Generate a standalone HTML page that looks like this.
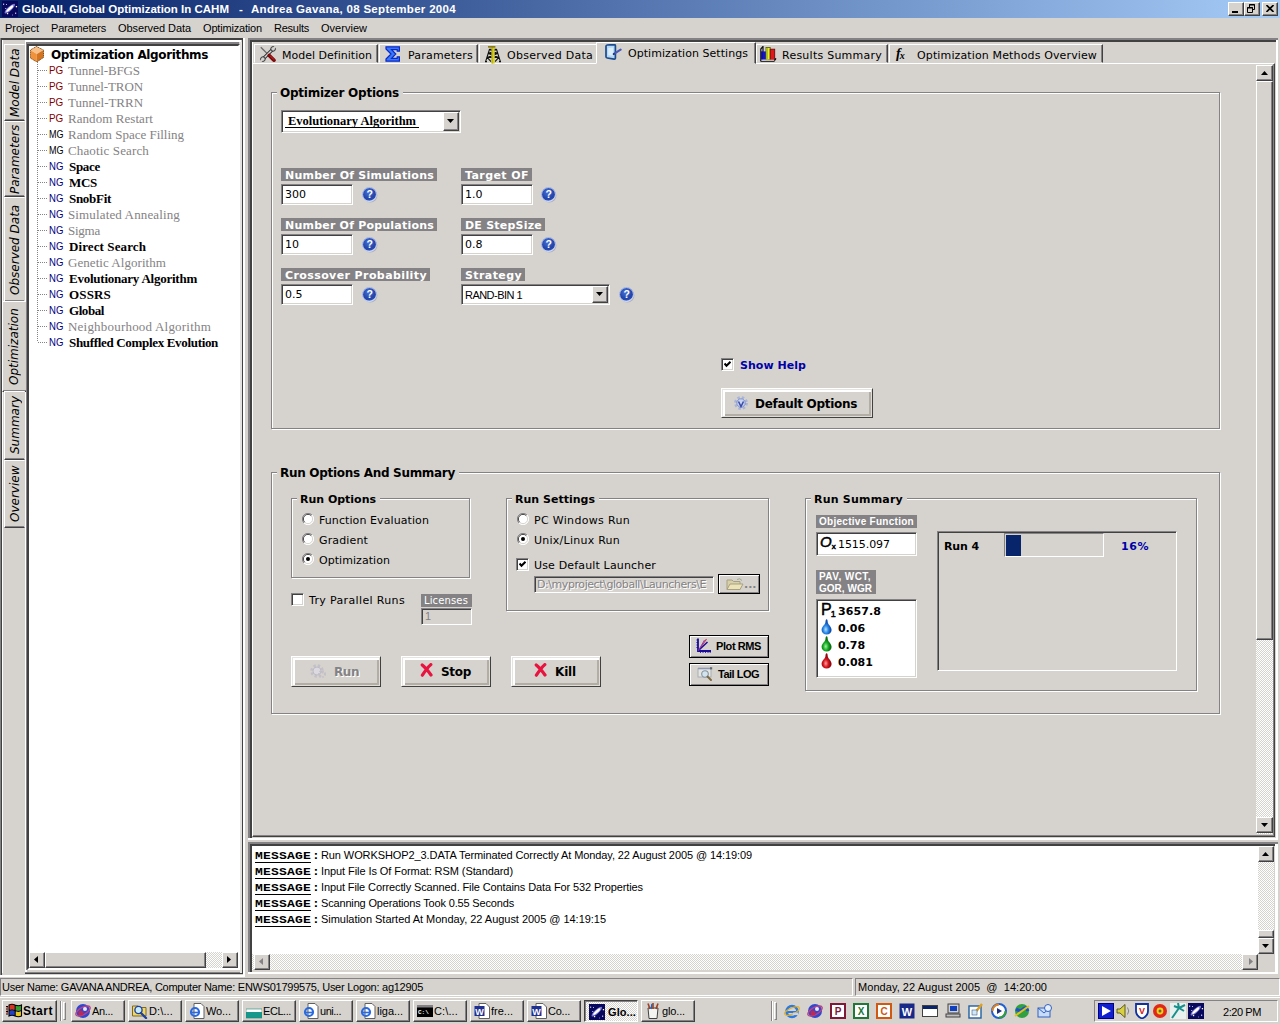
<!DOCTYPE html>
<html lang="en"><head><meta charset="utf-8"><title>GlobAll, Global Optimization In CAHM</title>
<style>
html,body{margin:0;padding:0;background:#d6d3ce}
#r{position:relative;width:1280px;height:1024px;overflow:hidden;background:#d6d3ce;color:#000;font:11px "Liberation Sans",sans-serif}
#r div,#r span,#r svg{position:absolute;box-sizing:border-box;white-space:nowrap;margin:0;padding:0}
.t{font-family:"Liberation Sans",sans-serif;font-size:11px}
.tb{font-family:"Liberation Sans",sans-serif;font-size:11px;font-weight:bold}
.v{font-family:"DejaVu Sans","Liberation Sans",sans-serif;font-size:11px}
.vb{font-family:"DejaVu Sans","Liberation Sans",sans-serif;font-size:11px;font-weight:bold}
.vg{font-family:"DejaVu Sans","Liberation Sans",sans-serif;font-size:12px;font-weight:bold}
.vi{font-family:"DejaVu Sans","Liberation Sans",sans-serif;font-size:12px;font-style:italic;writing-mode:vertical-rl;transform:rotate(180deg)}
.s{font-family:"Liberation Serif",serif;font-size:13px;color:#848284}
.sb{font-family:"Liberation Serif",serif;font-size:13px;font-weight:bold}
.m{font-family:"Liberation Mono",monospace;font-size:13px;font-weight:bold;transform:scaleY(.87);transform-origin:0 55%}
.btn{background:#d6d3ce;border:1px solid;border-color:#fff #424142 #424142 #fff;box-shadow:inset -1px -1px 0 #848284,inset 1px 1px 0 #d6d3ce}
.sbtn{background:#d6d3ce;border:1px solid;border-color:#d6d3ce #424142 #424142 #d6d3ce;box-shadow:inset -1px -1px 0 #848284,inset 1px 1px 0 #fff}
.gbtn{background:#d6d3ce;border:1px solid;border-color:#fff #424142 #424142 #fff;box-shadow:inset 1px 1px 0 #e6e4e0,inset -1px -1px 0 #e0ddd7,inset 3px 3px 0 #fff,inset -3px -3px 0 #b2aea6}
.bbtn{background:#d6d3ce;border:1px solid #000;box-shadow:inset 1px 1px 0 #fff,inset -1px -1px 0 #848284}
.sunk{border:1px solid;border-color:#848284 #fff #fff #848284;box-shadow:inset 1px 1px 0 #424142,inset -1px -1px 0 #d6d3ce}
.sunk2{border:1px solid;border-color:#848284 #fff #fff #848284;box-shadow:inset 1px 1px 0 #424142,inset 2px 2px 0 #424142,inset -1px -1px 0 #d6d3ce}
.sunk1{border:1px solid;border-color:#848284 #fff #fff #848284}
.grp{border:1px solid #848284;box-shadow:1px 1px 0 #fff,inset 1px 1px 0 #fff}
.lab{background:#848284;color:#fff}
.hatch{background:conic-gradient(#fff 25%,#d6d3ce 0 50%,#fff 0 75%,#d6d3ce 0) 0 0/2px 2px}
.w{background:#fff}
.g{background:#d6d3ce}
</style></head>
<body><div id="r">
<div style="left:0px;top:0px;width:1280px;height:18px;background:linear-gradient(90deg,#08246b 0%,#08246b 2%,#a5cbf7 100%)"></div>
<svg style="left:2px;top:1px" width="16" height="16" viewBox="0 0 16 16"><rect width="16" height="16" fill="#08085c"/><ellipse cx="7.8" cy="7.6" rx="6.8" ry="2.1" fill="#7a78d0" transform="rotate(-42 7.8 7.6)"/><ellipse cx="7.8" cy="7.6" rx="4.6" ry="1.3" fill="#fff" transform="rotate(-42 7.8 7.6)"/><rect x="1" y="2.6" width="1.2" height="1.2" fill="#dcd8ff"/><rect x="4" y="3" width="1" height="1" fill="#b8b0f0"/><rect x="13.8" y="5" width="1.3" height="1.3" fill="#fff"/><rect x="3.2" y="7" width="1" height="1" fill="#c8c0ff"/><rect x="5" y="12" width="1.2" height="1.2" fill="#fff"/><rect x="13" y="11.6" width="1.2" height="1.2" fill="#e0dcff"/><rect x="10" y="13.5" width="1" height="1" fill="#8078c8"/></svg>
<span class="tb" style="left:22px;top:1px;line-height:16px;height:16px;letter-spacing:0.000px;color:#fff;font-size:11.5px">GlobAll, Global Optimization In CAHM</span>
<span class="tb" style="left:239px;top:1px;line-height:16px;height:16px;color:#fff;font-size:11.5px">-</span>
<span class="tb" style="left:251px;top:1px;line-height:16px;height:16px;letter-spacing:0.313px;color:#fff;font-size:11.5px">Andrea Gavana, 08 September 2004</span>
<div class="btn" style="left:1228px;top:2px;width:16px;height:14px;"></div>
<div class="btn" style="left:1244px;top:2px;width:16px;height:14px;"></div>
<div class="btn" style="left:1262px;top:2px;width:16px;height:14px;"></div>
<svg style="left:1232px;top:11px" width="6" height="2" viewBox="0 0 6 2"><rect width="6" height="2" fill="#000"/></svg>
<svg style="left:1247px;top:4px" width="9" height="9" viewBox="0 0 9 9"><path d="M2.5 3 V0.5 H7.5 V5.5 H6 M2 1 H8 M0.5 3.5 H5.5 V8.5 H0.5 Z M0 4 H6" stroke="#000" fill="none" stroke-width="1"/></svg>
<svg style="left:1266px;top:5px" width="8" height="7" viewBox="0 0 8 7"><path d="M0.5 0 L7.5 7 M7.5 0 L0.5 7" stroke="#000" stroke-width="1.6"/></svg>
<span class="t" style="left:5px;top:19px;line-height:19px;height:19px;letter-spacing:-0.036px;">Project</span>
<span class="t" style="left:51px;top:19px;line-height:19px;height:19px;letter-spacing:-0.186px;">Parameters</span>
<span class="t" style="left:118px;top:19px;line-height:19px;height:19px;letter-spacing:-0.076px;">Observed Data</span>
<span class="t" style="left:203px;top:19px;line-height:19px;height:19px;letter-spacing:-0.178px;">Optimization</span>
<span class="t" style="left:274px;top:19px;line-height:19px;height:19px;letter-spacing:-0.241px;">Results</span>
<span class="t" style="left:321px;top:19px;line-height:19px;height:19px;letter-spacing:0.020px;">Overview</span>
<div style="left:0px;top:38px;width:1px;height:938px;background:#848284"></div>
<div style="left:1px;top:38px;width:1px;height:937px;background:#424142"></div>
<div style="left:1px;top:38px;width:242px;height:2px;background:#424142"></div>
<div style="left:242px;top:38px;width:1px;height:936px;background:#424142"></div>
<div style="left:243px;top:38px;width:2px;height:939px;background:#fff"></div>
<div style="left:0px;top:975px;width:245px;height:2px;background:#fff"></div>
<div style="left:2px;top:40px;width:1px;height:933px;background:#fff"></div>
<div style="left:25px;top:40px;width:2px;height:933px;background:#fff"></div>
<div style="left:25px;top:40px;width:216px;height:2px;background:#fff"></div>
<div style="left:25px;top:972px;width:217px;height:1px;background:#848284"></div>
<div style="left:25px;top:973px;width:217px;height:1px;background:#424142"></div>
<div style="left:240px;top:42px;width:2px;height:931px;background:#e4e2de"></div>
<div style="left:4px;top:44px;width:21px;height:77px;background:#d6d3ce;border:1px solid;border-color:#fff transparent #424142 #fff;box-shadow:inset 0 -1px 0 #848284"></div>
<div style="left:4px;top:121px;width:21px;height:76px;background:#d6d3ce;border:1px solid;border-color:#fff transparent #424142 #fff;box-shadow:inset 0 -1px 0 #848284"></div>
<div style="left:4px;top:197px;width:21px;height:105px;background:#d6d3ce;border:1px solid;border-color:#fff transparent #424142 #fff;box-shadow:inset 0 -1px 0 #848284"></div>
<div style="left:2px;top:301px;width:25px;height:91px;background:#d6d3ce;border:1px solid;border-color:#fff transparent #424142 #fff;box-shadow:inset 0 -1px 0 #848284"></div>
<div style="left:4px;top:391px;width:21px;height:69px;background:#d6d3ce;border:1px solid;border-color:#fff transparent #424142 #fff;box-shadow:inset 0 -1px 0 #848284"></div>
<div style="left:4px;top:460px;width:21px;height:68px;background:#d6d3ce;border:1px solid;border-color:#fff transparent #424142 #fff;box-shadow:inset 0 -1px 0 #848284"></div>
<span class="vi" style="left:7px;top:44px;height:77px;width:16px;line-height:16px;text-align:center">Model Data</span>
<span class="vi" style="left:7px;top:121px;height:76px;width:16px;line-height:16px;text-align:center">Parameters</span>
<span class="vi" style="left:7px;top:197px;height:105px;width:16px;line-height:16px;text-align:center">Observed Data</span>
<span class="vi" style="left:6px;top:302px;height:89px;width:16px;line-height:16px;text-align:center">Optimization</span>
<span class="vi" style="left:7px;top:391px;height:69px;width:16px;line-height:16px;text-align:center">Summary</span>
<span class="vi" style="left:7px;top:460px;height:68px;width:16px;line-height:16px;text-align:center">Overview</span>
<div style="left:27px;top:42px;width:212px;height:2px;background:#848284"></div>
<div style="left:26px;top:42px;width:1px;height:928px;background:#848284"></div>
<div class="w" style="left:27px;top:44px;width:213px;height:926px;border:2px solid;border-color:#424142 #fff #fff #424142"></div>
<svg style="left:30px;top:46px" width="14" height="16" viewBox="0 0 14 16"><polygon points="6.5,0.5 13.5,4 6.8,8 0.3,4" fill="#f8c088"/><polygon points="0.3,4 6.8,8 6.8,16 0.3,12" fill="#f0923c"/><polygon points="13.5,4 6.8,8 6.8,16 13.5,11.5" fill="#d47420"/><polygon points="6.5,0.5 13.5,4 13.5,11.5 6.8,16 0.3,12 0.3,4" fill="none" stroke="#70400c" stroke-width=".9" stroke-dasharray="1.2 .6"/></svg>
<span class="vg" style="left:51px;top:47px;line-height:16px;height:16px;letter-spacing:-0.363px;">Optimization Algorithms</span>
<div style="left:37px;top:62px;width:1px;height:280px;background:repeating-linear-gradient(180deg,#848284 0 1px,transparent 1px 2px)"></div>
<div style="left:38px;top:70px;width:10px;height:1px;background:repeating-linear-gradient(90deg,#848284 0 1px,transparent 1px 2px)"></div>
<span class="t" style="left:49px;top:62px;line-height:16px;height:16px;color:#800000;transform:scaleX(0.9);transform-origin:0 0">PG</span>
<span class="s" style="left:68px;top:63px;line-height:16px;height:16px;letter-spacing:-0.111px;">Tunnel-BFGS</span>
<div style="left:38px;top:86px;width:10px;height:1px;background:repeating-linear-gradient(90deg,#848284 0 1px,transparent 1px 2px)"></div>
<span class="t" style="left:49px;top:78px;line-height:16px;height:16px;color:#800000;transform:scaleX(0.9);transform-origin:0 0">PG</span>
<span class="s" style="left:68px;top:79px;line-height:16px;height:16px;letter-spacing:-0.099px;">Tunnel-TRON</span>
<div style="left:38px;top:102px;width:10px;height:1px;background:repeating-linear-gradient(90deg,#848284 0 1px,transparent 1px 2px)"></div>
<span class="t" style="left:49px;top:94px;line-height:16px;height:16px;color:#800000;transform:scaleX(0.9);transform-origin:0 0">PG</span>
<span class="s" style="left:68px;top:95px;line-height:16px;height:16px;letter-spacing:-0.034px;">Tunnel-TRRN</span>
<div style="left:38px;top:118px;width:10px;height:1px;background:repeating-linear-gradient(90deg,#848284 0 1px,transparent 1px 2px)"></div>
<span class="t" style="left:49px;top:110px;line-height:16px;height:16px;color:#800000;transform:scaleX(0.9);transform-origin:0 0">PG</span>
<span class="s" style="left:68px;top:111px;line-height:16px;height:16px;letter-spacing:0.061px;">Random Restart</span>
<div style="left:38px;top:134px;width:10px;height:1px;background:repeating-linear-gradient(90deg,#848284 0 1px,transparent 1px 2px)"></div>
<span class="t" style="left:49px;top:126px;line-height:16px;height:16px;color:#000;transform:scaleX(0.82);transform-origin:0 0">MG</span>
<span class="s" style="left:68px;top:127px;line-height:16px;height:16px;letter-spacing:-0.014px;">Random Space Filling</span>
<div style="left:38px;top:150px;width:10px;height:1px;background:repeating-linear-gradient(90deg,#848284 0 1px,transparent 1px 2px)"></div>
<span class="t" style="left:49px;top:142px;line-height:16px;height:16px;color:#000;transform:scaleX(0.82);transform-origin:0 0">MG</span>
<span class="s" style="left:68px;top:143px;line-height:16px;height:16px;letter-spacing:0.138px;">Chaotic Search</span>
<div style="left:38px;top:166px;width:10px;height:1px;background:repeating-linear-gradient(90deg,#848284 0 1px,transparent 1px 2px)"></div>
<span class="t" style="left:49px;top:158px;line-height:16px;height:16px;color:#000080;transform:scaleX(0.87);transform-origin:0 0">NG</span>
<span class="sb" style="left:69px;top:159px;line-height:16px;height:16px;letter-spacing:-0.300px;">Space</span>
<div style="left:38px;top:182px;width:10px;height:1px;background:repeating-linear-gradient(90deg,#848284 0 1px,transparent 1px 2px)"></div>
<span class="t" style="left:49px;top:174px;line-height:16px;height:16px;color:#000080;transform:scaleX(0.87);transform-origin:0 0">NG</span>
<span class="sb" style="left:69px;top:175px;line-height:16px;height:16px;letter-spacing:-0.297px;">MCS</span>
<div style="left:38px;top:198px;width:10px;height:1px;background:repeating-linear-gradient(90deg,#848284 0 1px,transparent 1px 2px)"></div>
<span class="t" style="left:49px;top:190px;line-height:16px;height:16px;color:#000080;transform:scaleX(0.87);transform-origin:0 0">NG</span>
<span class="sb" style="left:69px;top:191px;line-height:16px;height:16px;letter-spacing:-0.297px;">SnobFit</span>
<div style="left:38px;top:214px;width:10px;height:1px;background:repeating-linear-gradient(90deg,#848284 0 1px,transparent 1px 2px)"></div>
<span class="t" style="left:49px;top:206px;line-height:16px;height:16px;color:#000080;transform:scaleX(0.87);transform-origin:0 0">NG</span>
<span class="s" style="left:68px;top:207px;line-height:16px;height:16px;letter-spacing:0.137px;">Simulated Annealing</span>
<div style="left:38px;top:230px;width:10px;height:1px;background:repeating-linear-gradient(90deg,#848284 0 1px,transparent 1px 2px)"></div>
<span class="t" style="left:49px;top:222px;line-height:16px;height:16px;color:#000080;transform:scaleX(0.87);transform-origin:0 0">NG</span>
<span class="s" style="left:68px;top:223px;line-height:16px;height:16px;letter-spacing:-0.247px;">Sigma</span>
<div style="left:38px;top:246px;width:10px;height:1px;background:repeating-linear-gradient(90deg,#848284 0 1px,transparent 1px 2px)"></div>
<span class="t" style="left:49px;top:238px;line-height:16px;height:16px;color:#000080;transform:scaleX(0.87);transform-origin:0 0">NG</span>
<span class="sb" style="left:69px;top:239px;line-height:16px;height:16px;letter-spacing:0.100px;">Direct Search</span>
<div style="left:38px;top:262px;width:10px;height:1px;background:repeating-linear-gradient(90deg,#848284 0 1px,transparent 1px 2px)"></div>
<span class="t" style="left:49px;top:254px;line-height:16px;height:16px;color:#000080;transform:scaleX(0.87);transform-origin:0 0">NG</span>
<span class="s" style="left:68px;top:255px;line-height:16px;height:16px;letter-spacing:0.051px;">Genetic Algorithm</span>
<div style="left:38px;top:278px;width:10px;height:1px;background:repeating-linear-gradient(90deg,#848284 0 1px,transparent 1px 2px)"></div>
<span class="t" style="left:49px;top:270px;line-height:16px;height:16px;color:#000080;transform:scaleX(0.87);transform-origin:0 0">NG</span>
<span class="sb" style="left:69px;top:271px;line-height:16px;height:16px;letter-spacing:-0.239px;">Evolutionary Algorithm</span>
<div style="left:38px;top:294px;width:10px;height:1px;background:repeating-linear-gradient(90deg,#848284 0 1px,transparent 1px 2px)"></div>
<span class="t" style="left:49px;top:286px;line-height:16px;height:16px;color:#000080;transform:scaleX(0.87);transform-origin:0 0">NG</span>
<span class="sb" style="left:69px;top:287px;line-height:16px;height:16px;letter-spacing:0.159px;">OSSRS</span>
<div style="left:38px;top:310px;width:10px;height:1px;background:repeating-linear-gradient(90deg,#848284 0 1px,transparent 1px 2px)"></div>
<span class="t" style="left:49px;top:302px;line-height:16px;height:16px;color:#000080;transform:scaleX(0.87);transform-origin:0 0">NG</span>
<span class="sb" style="left:69px;top:303px;line-height:16px;height:16px;letter-spacing:-0.430px;">Global</span>
<div style="left:38px;top:326px;width:10px;height:1px;background:repeating-linear-gradient(90deg,#848284 0 1px,transparent 1px 2px)"></div>
<span class="t" style="left:49px;top:318px;line-height:16px;height:16px;color:#000080;transform:scaleX(0.87);transform-origin:0 0">NG</span>
<span class="s" style="left:68px;top:319px;line-height:16px;height:16px;letter-spacing:0.204px;">Neighbourhood Algorithm</span>
<div style="left:38px;top:342px;width:10px;height:1px;background:repeating-linear-gradient(90deg,#848284 0 1px,transparent 1px 2px)"></div>
<span class="t" style="left:49px;top:334px;line-height:16px;height:16px;color:#000080;transform:scaleX(0.87);transform-origin:0 0">NG</span>
<span class="sb" style="left:69px;top:335px;line-height:16px;height:16px;letter-spacing:-0.326px;">Shuffled Complex Evolution</span>
<div class="hatch" style="left:29px;top:952px;width:209px;height:16px;"></div>
<div class="btn" style="left:29px;top:952px;width:16px;height:16px;"></div>
<svg style="left:34px;top:956px" width="4" height="7" viewBox="0 0 4 7"><polygon points="4,0 4,7 0,3.5" fill="#000"/></svg>
<div class="btn" style="left:45px;top:952px;width:161px;height:16px;"></div>
<div class="btn" style="left:222px;top:952px;width:16px;height:16px;"></div>
<svg style="left:227px;top:956px" width="4" height="7" viewBox="0 0 4 7"><polygon points="0,0 4,3.5 0,7" fill="#000"/></svg>
<div style="left:248px;top:38px;width:1030px;height:2px;background:#848284"></div>
<div style="left:248px;top:38px;width:2px;height:802px;background:#848284"></div>
<div style="left:250px;top:40px;width:1028px;height:2px;background:#424142"></div>
<div style="left:250px;top:40px;width:2px;height:798px;background:#424142"></div>
<div style="left:1276px;top:40px;width:2px;height:800px;background:#fff"></div>
<div style="left:248px;top:838px;width:1030px;height:2px;background:#fff"></div>
<div style="left:252px;top:63px;width:1023px;height:774px;border:1px solid;border-color:#fff #424142 #424142 #fff;box-shadow:inset -1px -1px 0 #848284"></div>
<div style="left:252px;top:42px;width:1px;height:22px;background:#fff"></div>
<div style="left:254px;top:44px;width:124px;height:19px;border:1px solid;border-color:#fff #424142 transparent #fff;box-shadow:inset -1px 0 0 #848284"></div>
<svg style="left:260px;top:46px" width="16" height="16" viewBox="0 0 16 16"><path d="M0.8 1.2 L8 8.4" stroke="#686868" stroke-width="1.3"/><path d="M3 13 L13 3" stroke="#303030" stroke-width="3.2"/><path d="M3 13 L13 3" stroke="#d8d8d8" stroke-width="1.5"/><circle cx="2.9" cy="13.1" r="2.3" fill="#d0d0d0" stroke="#303030" stroke-width="1"/><path d="M2.6 13.4 L0 16" stroke="#d6d3ce" stroke-width="1.8"/><circle cx="13.1" cy="2.9" r="2.3" fill="#d0d0d0" stroke="#303030" stroke-width="1"/><path d="M13.4 2.6 L16 0" stroke="#d6d3ce" stroke-width="1.8"/><path d="M9.2 9.4 L14 14.2" stroke="#7c0c0c" stroke-width="3.6" stroke-linecap="round"/><path d="M10 9.6 L14 13.6" stroke="#c83030" stroke-width="1"/></svg>
<span class="v" style="left:282px;top:48px;line-height:16px;height:16px;letter-spacing:0.013px;">Model Definition</span>
<div style="left:379px;top:44px;width:99px;height:19px;border:1px solid;border-color:#fff #424142 transparent #fff;box-shadow:inset -1px 0 0 #848284"></div>
<svg style="left:385px;top:46px" width="16" height="16" viewBox="0 0 16 16"><path d="M1 0.8 H14.4 V5.2 H12.2 V3.6 H6.6 L10.8 8 L6.6 12.4 H12.2 V10.8 H14.4 V15.2 H1 V13 L6 8 L1 3 Z" fill="#3a78f8" stroke="#0a28c8" stroke-width="1.2" stroke-linejoin="miter"/></svg>
<span class="v" style="left:408px;top:48px;line-height:16px;height:16px;letter-spacing:0.203px;">Parameters</span>
<div style="left:479px;top:44px;width:119px;height:19px;border:1px solid;border-color:#fff #424142 transparent #fff;box-shadow:inset -1px 0 0 #848284"></div>
<svg style="left:485px;top:46px" width="16" height="18" viewBox="0 0 16 18"><path d="M4.6 3 L0.6 15.6 M11.4 3 L15.4 15.6 M4.6 3.4 H11.4 M3.4 7.4 H12.6 M2.2 11.4 H13.8 M3.4 7.4 L13.8 11.4 M12.6 7.4 L2.2 11.4 M4.6 3.4 L12.6 7.4 M11.4 3.4 L3.4 7.4 M2.2 11.4 L6 15.6 M13.8 11.4 L10 15.6" stroke="#101010" stroke-width="1.1" fill="none"/><path d="M0 15.6 H2 M14 15.6 H16" stroke="#101010" stroke-width="1.2"/><rect x="6.6" y="0.4" width="3.1" height="17.2" fill="#d8d020"/><rect x="6.6" y="0.4" width="1" height="17.2" fill="#b0a818"/><rect x="3" y="0" width="7.4" height="1.7" fill="#8a7c10"/></svg>
<span class="v" style="left:507px;top:48px;line-height:16px;height:16px;letter-spacing:0.255px;">Observed Data</span>
<div style="left:756px;top:44px;width:132px;height:19px;border:1px solid;border-color:#fff #424142 transparent #fff;box-shadow:inset -1px 0 0 #848284"></div>
<svg style="left:760px;top:46px" width="17" height="16" viewBox="0 0 17 16"><path d="M0.8 15 V3 L3 0.4 V6" stroke="#101010" fill="none" stroke-width="1.2"/><rect x="1.3" y="5.4" width="4.8" height="8.4" fill="#1414d0"/><rect x="1.3" y="5.4" width="1.2" height="8.4" fill="#0a0a80"/><rect x="6" y="1.5" width="4.2" height="12.3" fill="#e8f030" stroke="#606008" stroke-width=".9"/><rect x="6.6" y="2" width="1.3" height="11.4" fill="#a8c018"/><rect x="10.2" y="3.2" width="4.5" height="10.6" fill="#e01818" stroke="#700808" stroke-width=".9"/><path d="M0.4 15.2 H14 L16 12.4" stroke="#000" fill="none" stroke-width="1.3"/><path d="M1.4 14.2 H14.4" stroke="#fff" stroke-width=".9"/></svg>
<span class="v" style="left:782px;top:48px;line-height:16px;height:16px;letter-spacing:0.242px;">Results Summary</span>
<div style="left:889px;top:44px;width:214px;height:19px;border:1px solid;border-color:#fff #424142 transparent #fff;box-shadow:inset -1px 0 0 #848284"></div>
<span style="left:896px;top:46px;line-height:16px;height:16px;font:italic bold 14px 'Liberation Serif',serif">f<span style="position:static;font:italic bold 10px 'Liberation Serif',serif;vertical-align:-1px;margin-left:-1px">x</span></span>
<span class="v" style="left:917px;top:48px;line-height:16px;height:16px;letter-spacing:0.133px;">Optimization Methods Overview</span>
<div style="left:596px;top:42px;width:160px;height:22px;background:#d6d3ce;border:1px solid;border-color:#fff #424142 transparent #fff;box-shadow:inset -1px 0 0 #848284"></div>
<svg style="left:604px;top:44px" width="18" height="16" viewBox="0 0 18 16"><path d="M2 2.2 Q2 1.2 3.2 1 L10.2 0.6 Q11.4 0.6 11.4 1.8 V14 Q11.4 15.2 10.2 15.1 L3.2 14 Q2 13.8 2 12.8 Z" fill="#b4d8f6" stroke="#1c4a8c" stroke-width="1.7"/><path d="M4.2 4 L9.2 3.6 V11.8 L4.2 11.2 Z" fill="#dceef8"/><path d="M16.6 5.6 L10 9.8" stroke="#4a58b8" stroke-width="2.1" stroke-linecap="round"/><path d="M10.6 9.4 L9 10.6" stroke="#26346c" stroke-width="1.6"/></svg>
<span class="v" style="left:628px;top:46px;line-height:16px;height:16px;letter-spacing:0.048px;">Optimization Settings</span>
<div class="hatch" style="left:1256px;top:65px;width:17px;height:769px;"></div>
<div class="btn" style="left:1256px;top:65px;width:17px;height:16px;"></div>
<svg style="left:1261px;top:71px" width="7" height="4" viewBox="0 0 7 4"><polygon points="0,4 3.5,0 7,4" fill="#000"/></svg>
<div class="btn" style="left:1256px;top:81px;width:17px;height:559px;"></div>
<div class="btn" style="left:1256px;top:817px;width:17px;height:16px;"></div>
<svg style="left:1261px;top:823px" width="7" height="4" viewBox="0 0 7 4"><polygon points="0,0 7,0 3.5,4" fill="#000"/></svg>
<div class="grp" style="left:271px;top:92px;width:949px;height:337px;"></div>
<div class="g" style="left:277px;top:86px;width:126px;height:14px;"></div>
<span class="vg" style="left:280px;top:85px;line-height:16px;height:16px;letter-spacing:-0.238px;">Optimizer Options</span>
<div class="sunk w" style="left:281px;top:110px;width:180px;height:23px;"></div>
<span class="sb" style="left:288px;top:113px;line-height:17px;height:17px;letter-spacing:-0.006px;font-size:12.5px">Evolutionary Algorithm</span>
<div style="left:285px;top:127px;width:134px;height:1px;background:#000"></div>
<div class="btn" style="left:443px;top:112px;width:16px;height:19px;"></div>
<svg style="left:447px;top:119px" width="7" height="4" viewBox="0 0 7 4"><polygon points="0,0 7,0 3.5,4" fill="#000"/></svg>
<div class="lab" style="left:281px;top:168px;width:156px;height:13px;"></div>
<span class="vb" style="left:285px;top:168px;line-height:15px;height:15px;letter-spacing:0.228px;color:#fff">Number Of Simulations</span>
<div class="sunk w" style="left:281px;top:184px;width:72px;height:21px;"></div>
<span class="v" style="left:285px;top:186px;line-height:17px;height:17px;">300</span>
<svg style="left:362px;top:187px" width="16" height="16" viewBox="0 0 16 16"><defs><radialGradient id="hg" cx="45%" cy="35%" r="62%"><stop offset="0" stop-color="#4a74d8"/><stop offset=".7" stop-color="#2444a8"/><stop offset=".86" stop-color="#2a4cb0"/><stop offset="1" stop-color="#b8c8f0"/></radialGradient></defs><circle cx="8.4" cy="8.6" r="7" fill="#8890b0" opacity=".5"/><circle cx="7.5" cy="7.5" r="7.2" fill="url(#hg)"/><circle cx="7.5" cy="7.5" r="6.9" fill="none" stroke="#dce6ff" stroke-width=".9" opacity=".85"/><text x="7.6" y="11.4" text-anchor="middle" font-family="Liberation Sans,sans-serif" font-weight="bold" font-size="10.5" fill="#fff">?</text></svg>
<div class="lab" style="left:461px;top:168px;width:71px;height:13px;"></div>
<span class="vb" style="left:465px;top:168px;line-height:15px;height:15px;letter-spacing:0.418px;color:#fff">Target OF</span>
<div class="sunk w" style="left:461px;top:184px;width:72px;height:21px;"></div>
<span class="v" style="left:465px;top:186px;line-height:17px;height:17px;">1.0</span>
<svg style="left:541px;top:187px" width="16" height="16" viewBox="0 0 16 16"><defs><radialGradient id="hg" cx="45%" cy="35%" r="62%"><stop offset="0" stop-color="#4a74d8"/><stop offset=".7" stop-color="#2444a8"/><stop offset=".86" stop-color="#2a4cb0"/><stop offset="1" stop-color="#b8c8f0"/></radialGradient></defs><circle cx="8.4" cy="8.6" r="7" fill="#8890b0" opacity=".5"/><circle cx="7.5" cy="7.5" r="7.2" fill="url(#hg)"/><circle cx="7.5" cy="7.5" r="6.9" fill="none" stroke="#dce6ff" stroke-width=".9" opacity=".85"/><text x="7.6" y="11.4" text-anchor="middle" font-family="Liberation Sans,sans-serif" font-weight="bold" font-size="10.5" fill="#fff">?</text></svg>
<div class="lab" style="left:281px;top:218px;width:156px;height:13px;"></div>
<span class="vb" style="left:285px;top:218px;line-height:15px;height:15px;letter-spacing:0.212px;color:#fff">Number Of Populations</span>
<div class="sunk w" style="left:281px;top:234px;width:72px;height:21px;"></div>
<span class="v" style="left:285px;top:236px;line-height:17px;height:17px;">10</span>
<svg style="left:362px;top:237px" width="16" height="16" viewBox="0 0 16 16"><defs><radialGradient id="hg" cx="45%" cy="35%" r="62%"><stop offset="0" stop-color="#4a74d8"/><stop offset=".7" stop-color="#2444a8"/><stop offset=".86" stop-color="#2a4cb0"/><stop offset="1" stop-color="#b8c8f0"/></radialGradient></defs><circle cx="8.4" cy="8.6" r="7" fill="#8890b0" opacity=".5"/><circle cx="7.5" cy="7.5" r="7.2" fill="url(#hg)"/><circle cx="7.5" cy="7.5" r="6.9" fill="none" stroke="#dce6ff" stroke-width=".9" opacity=".85"/><text x="7.6" y="11.4" text-anchor="middle" font-family="Liberation Sans,sans-serif" font-weight="bold" font-size="10.5" fill="#fff">?</text></svg>
<div class="lab" style="left:461px;top:218px;width:84px;height:13px;"></div>
<span class="vb" style="left:465px;top:218px;line-height:15px;height:15px;letter-spacing:0.223px;color:#fff">DE StepSize</span>
<div class="sunk w" style="left:461px;top:234px;width:72px;height:21px;"></div>
<span class="v" style="left:465px;top:236px;line-height:17px;height:17px;">0.8</span>
<svg style="left:541px;top:237px" width="16" height="16" viewBox="0 0 16 16"><defs><radialGradient id="hg" cx="45%" cy="35%" r="62%"><stop offset="0" stop-color="#4a74d8"/><stop offset=".7" stop-color="#2444a8"/><stop offset=".86" stop-color="#2a4cb0"/><stop offset="1" stop-color="#b8c8f0"/></radialGradient></defs><circle cx="8.4" cy="8.6" r="7" fill="#8890b0" opacity=".5"/><circle cx="7.5" cy="7.5" r="7.2" fill="url(#hg)"/><circle cx="7.5" cy="7.5" r="6.9" fill="none" stroke="#dce6ff" stroke-width=".9" opacity=".85"/><text x="7.6" y="11.4" text-anchor="middle" font-family="Liberation Sans,sans-serif" font-weight="bold" font-size="10.5" fill="#fff">?</text></svg>
<div class="lab" style="left:281px;top:268px;width:149px;height:13px;"></div>
<span class="vb" style="left:285px;top:268px;line-height:15px;height:15px;letter-spacing:0.403px;color:#fff">Crossover Probability</span>
<div class="sunk w" style="left:281px;top:284px;width:72px;height:21px;"></div>
<span class="v" style="left:285px;top:286px;line-height:17px;height:17px;">0.5</span>
<svg style="left:362px;top:287px" width="16" height="16" viewBox="0 0 16 16"><defs><radialGradient id="hg" cx="45%" cy="35%" r="62%"><stop offset="0" stop-color="#4a74d8"/><stop offset=".7" stop-color="#2444a8"/><stop offset=".86" stop-color="#2a4cb0"/><stop offset="1" stop-color="#b8c8f0"/></radialGradient></defs><circle cx="8.4" cy="8.6" r="7" fill="#8890b0" opacity=".5"/><circle cx="7.5" cy="7.5" r="7.2" fill="url(#hg)"/><circle cx="7.5" cy="7.5" r="6.9" fill="none" stroke="#dce6ff" stroke-width=".9" opacity=".85"/><text x="7.6" y="11.4" text-anchor="middle" font-family="Liberation Sans,sans-serif" font-weight="bold" font-size="10.5" fill="#fff">?</text></svg>
<div class="lab" style="left:461px;top:268px;width:64px;height:13px;"></div>
<span class="vb" style="left:465px;top:268px;line-height:15px;height:15px;letter-spacing:0.400px;color:#fff">Strategy</span>
<div class="sunk w" style="left:461px;top:284px;width:149px;height:21px;"></div>
<span class="t" style="left:465px;top:287px;line-height:17px;height:17px;letter-spacing:-0.534px;">RAND-BIN 1</span>
<div class="btn" style="left:592px;top:286px;width:16px;height:17px;"></div>
<svg style="left:596px;top:292px" width="7" height="4" viewBox="0 0 7 4"><polygon points="0,0 7,0 3.5,4" fill="#000"/></svg>
<svg style="left:619px;top:287px" width="16" height="16" viewBox="0 0 16 16"><defs><radialGradient id="hg" cx="45%" cy="35%" r="62%"><stop offset="0" stop-color="#4a74d8"/><stop offset=".7" stop-color="#2444a8"/><stop offset=".86" stop-color="#2a4cb0"/><stop offset="1" stop-color="#b8c8f0"/></radialGradient></defs><circle cx="8.4" cy="8.6" r="7" fill="#8890b0" opacity=".5"/><circle cx="7.5" cy="7.5" r="7.2" fill="url(#hg)"/><circle cx="7.5" cy="7.5" r="6.9" fill="none" stroke="#dce6ff" stroke-width=".9" opacity=".85"/><text x="7.6" y="11.4" text-anchor="middle" font-family="Liberation Sans,sans-serif" font-weight="bold" font-size="10.5" fill="#fff">?</text></svg>
<div class="sunk w" style="left:721px;top:358px;width:13px;height:13px;"></div>
<svg style="left:724px;top:361px" width="7" height="7" viewBox="0 0 7 7"><path d="M0.5 2.5 L2.5 4.8 L6.5 0.8" stroke="#000" stroke-width="2.1" fill="none"/></svg>
<span class="vb" style="left:740px;top:358px;line-height:15px;height:15px;letter-spacing:0.042px;color:#0000a8">Show Help</span>
<div class="gbtn" style="left:721px;top:388px;width:152px;height:30px;"></div>
<svg style="left:733px;top:395px" width="16" height="16" viewBox="0 0 16 16"><circle cx="8" cy="8" r="5.2" fill="none" stroke="#a8b4d8" stroke-width="3.4" stroke-dasharray="2.2 1.9"/><circle cx="8" cy="8" r="4.2" fill="#c8d4f0" stroke="#7888c0" stroke-width=".8"/><path d="M5.5 6.5 L8 11.5 L10.5 6.5" stroke="#3848a8" stroke-width="1.5" fill="none"/></svg>
<span class="vg" style="left:755px;top:396px;line-height:16px;height:16px;letter-spacing:-0.304px;">Default Options</span>
<div class="grp" style="left:271px;top:472px;width:949px;height:242px;"></div>
<div class="g" style="left:277px;top:466px;width:182px;height:14px;"></div>
<span class="vg" style="left:280px;top:465px;line-height:16px;height:16px;letter-spacing:-0.300px;">Run Options And Summary</span>
<div class="grp" style="left:291px;top:498px;width:179px;height:80px;"></div>
<div class="g" style="left:297px;top:492px;width:83px;height:13px;"></div>
<span class="vb" style="left:300px;top:492px;line-height:15px;height:15px;letter-spacing:-0.014px;">Run Options</span>
<svg style="left:302px;top:513px" width="12" height="12" viewBox="0 0 12 12"><circle cx="6" cy="6" r="5.5" fill="#fff"/><path d="M10 2 A5.6 5.6 0 0 0 2 10" stroke="#848284" fill="none" stroke-width="1"/><path d="M9.3 2.7 A4.6 4.6 0 0 0 2.7 9.3" stroke="#424142" fill="none" stroke-width="1"/><path d="M2 10 A5.6 5.6 0 0 0 10 2" stroke="#fff" fill="none" stroke-width="1"/><path d="M2.7 9.3 A4.6 4.6 0 0 0 9.3 2.7" stroke="#d6d3ce" fill="none" stroke-width="1"/></svg>
<span class="v" style="left:319px;top:513px;line-height:15px;height:15px;letter-spacing:0.088px;">Function Evaluation</span>
<svg style="left:302px;top:533px" width="12" height="12" viewBox="0 0 12 12"><circle cx="6" cy="6" r="5.5" fill="#fff"/><path d="M10 2 A5.6 5.6 0 0 0 2 10" stroke="#848284" fill="none" stroke-width="1"/><path d="M9.3 2.7 A4.6 4.6 0 0 0 2.7 9.3" stroke="#424142" fill="none" stroke-width="1"/><path d="M2 10 A5.6 5.6 0 0 0 10 2" stroke="#fff" fill="none" stroke-width="1"/><path d="M2.7 9.3 A4.6 4.6 0 0 0 9.3 2.7" stroke="#d6d3ce" fill="none" stroke-width="1"/></svg>
<span class="v" style="left:319px;top:533px;line-height:15px;height:15px;letter-spacing:0.139px;">Gradient</span>
<svg style="left:302px;top:553px" width="12" height="12" viewBox="0 0 12 12"><circle cx="6" cy="6" r="5.5" fill="#fff"/><path d="M10 2 A5.6 5.6 0 0 0 2 10" stroke="#848284" fill="none" stroke-width="1"/><path d="M9.3 2.7 A4.6 4.6 0 0 0 2.7 9.3" stroke="#424142" fill="none" stroke-width="1"/><path d="M2 10 A5.6 5.6 0 0 0 10 2" stroke="#fff" fill="none" stroke-width="1"/><path d="M2.7 9.3 A4.6 4.6 0 0 0 9.3 2.7" stroke="#d6d3ce" fill="none" stroke-width="1"/><circle cx="6" cy="6" r="2" fill="#000"/></svg>
<span class="v" style="left:319px;top:553px;line-height:15px;height:15px;letter-spacing:0.052px;">Optimization</span>
<div class="sunk w" style="left:291px;top:593px;width:13px;height:13px;"></div>
<span class="v" style="left:309px;top:593px;line-height:15px;height:15px;letter-spacing:0.351px;">Try Parallel Runs</span>
<div class="lab" style="left:421px;top:594px;width:51px;height:13px;"></div>
<span class="v" style="left:424px;top:594px;line-height:14px;height:14px;letter-spacing:0.135px;color:#fff;font-size:10px">Licenses</span>
<div class="sunk" style="left:421px;top:608px;width:51px;height:17px;"></div>
<span class="t" style="left:425px;top:610px;line-height:13px;height:13px;color:#848284">1</span>
<div class="gbtn" style="left:291px;top:656px;width:90px;height:31px;"></div>
<svg style="left:309px;top:663px" width="18" height="16" viewBox="0 0 18 16"><circle cx="8" cy="8" r="5.2" fill="none" stroke="#c4c0c8" stroke-width="3.2" stroke-dasharray="2.2 1.9"/><circle cx="8" cy="8" r="4" fill="#dcdae0" stroke="#b8b4c0" stroke-width=".8"/><circle cx="13" cy="11" r="3" fill="none" stroke="#c4c0c8" stroke-width="2" stroke-dasharray="1.5 1.3"/></svg>
<span class="vg" style="left:334px;top:664px;line-height:16px;height:16px;letter-spacing:-0.443px;color:#848284;text-shadow:1px 1px 0 #fff">Run</span>
<div class="gbtn" style="left:401px;top:656px;width:90px;height:31px;"></div>
<svg style="left:420px;top:663px" width="14" height="14" viewBox="0 0 14 14"><path d="M2.2 2 Q6 5 11 12 M10.8 1.6 Q7 5 2.4 12.2" stroke="#e81440" stroke-width="3.2" stroke-linecap="round" fill="none"/></svg>
<span class="vg" style="left:441px;top:664px;line-height:16px;height:16px;letter-spacing:-0.305px;">Stop</span>
<div class="gbtn" style="left:511px;top:656px;width:90px;height:31px;"></div>
<svg style="left:534px;top:663px" width="14" height="14" viewBox="0 0 14 14"><path d="M2.2 2 Q6 5 11 12 M10.8 1.6 Q7 5 2.4 12.2" stroke="#e81440" stroke-width="3.2" stroke-linecap="round" fill="none"/></svg>
<span class="vg" style="left:555px;top:664px;line-height:16px;height:16px;letter-spacing:-0.160px;">Kill</span>
<div class="grp" style="left:506px;top:498px;width:263px;height:113px;"></div>
<div class="g" style="left:512px;top:492px;width:87px;height:13px;"></div>
<span class="vb" style="left:515px;top:492px;line-height:15px;height:15px;letter-spacing:0.009px;">Run Settings</span>
<svg style="left:517px;top:513px" width="12" height="12" viewBox="0 0 12 12"><circle cx="6" cy="6" r="5.5" fill="#fff"/><path d="M10 2 A5.6 5.6 0 0 0 2 10" stroke="#848284" fill="none" stroke-width="1"/><path d="M9.3 2.7 A4.6 4.6 0 0 0 2.7 9.3" stroke="#424142" fill="none" stroke-width="1"/><path d="M2 10 A5.6 5.6 0 0 0 10 2" stroke="#fff" fill="none" stroke-width="1"/><path d="M2.7 9.3 A4.6 4.6 0 0 0 9.3 2.7" stroke="#d6d3ce" fill="none" stroke-width="1"/></svg>
<span class="v" style="left:534px;top:513px;line-height:15px;height:15px;letter-spacing:0.320px;">PC Windows Run</span>
<svg style="left:517px;top:533px" width="12" height="12" viewBox="0 0 12 12"><circle cx="6" cy="6" r="5.5" fill="#fff"/><path d="M10 2 A5.6 5.6 0 0 0 2 10" stroke="#848284" fill="none" stroke-width="1"/><path d="M9.3 2.7 A4.6 4.6 0 0 0 2.7 9.3" stroke="#424142" fill="none" stroke-width="1"/><path d="M2 10 A5.6 5.6 0 0 0 10 2" stroke="#fff" fill="none" stroke-width="1"/><path d="M2.7 9.3 A4.6 4.6 0 0 0 9.3 2.7" stroke="#d6d3ce" fill="none" stroke-width="1"/><circle cx="6" cy="6" r="2" fill="#000"/></svg>
<span class="v" style="left:534px;top:533px;line-height:15px;height:15px;letter-spacing:0.248px;">Unix/Linux Run</span>
<div class="sunk w" style="left:516px;top:558px;width:13px;height:13px;"></div>
<svg style="left:519px;top:561px" width="7" height="7" viewBox="0 0 7 7"><path d="M0.5 2.5 L2.5 4.8 L6.5 0.8" stroke="#000" stroke-width="2.1" fill="none"/></svg>
<span class="v" style="left:534px;top:558px;line-height:15px;height:15px;letter-spacing:0.157px;">Use Default Launcher</span>
<div class="sunk" style="left:534px;top:576px;width:180px;height:17px;"></div>
<span class="v" style="left:537px;top:578px;line-height:14px;height:14px;letter-spacing:-0.432px;color:#848284;text-shadow:1px 1px 0 #fff">D:\myproject\globall\Launchers\E</span>
<div class="bbtn" style="left:718px;top:574px;width:42px;height:20px;"></div>
<svg style="left:726px;top:577px" width="18" height="14" viewBox="0 0 18 14"><path d="M1 3 H6 L7.5 4.5 H14 V12.5 H1 Z" fill="#d8d0a8" stroke="#a8a080" stroke-width="1"/><path d="M1 12.5 L4 7 H17 L14 12.5 Z" fill="#ece4b8" stroke="#a8a080" stroke-width="1"/><path d="M11 2.5 q3 -2 5 1" stroke="#a0a890" fill="none"/></svg>
<span class="vb" style="left:744px;top:578px;line-height:14px;height:14px;color:#848284">...</span>
<div class="bbtn" style="left:689px;top:635px;width:80px;height:23px;"></div>
<svg style="left:696px;top:638px" width="16" height="16" viewBox="0 0 16 16"><path d="M2 0.5 V13 H15" stroke="#1a0a9c" stroke-width="1.8" fill="none"/><path d="M0.5 2 h1.5 M0.5 4.5 h1.5 M0.5 7 h1.5 M0.5 9.5 h1.5 M4.5 13 v1.8 M7 13 v1.8 M9.5 13 v1.8 M12 13 v1.8 M14.2 13 v1.8" stroke="#1a0a9c" stroke-width="1"/><path d="M2.5 12.5 L10.5 1" stroke="#c83050" stroke-width="1.1"/><path d="M2.5 12.5 L11.5 4" stroke="#1a0a9c" stroke-width="1.5"/><path d="M2.5 12.5 L8.5 2" stroke="#9040b0" stroke-width="1"/></svg>
<span class="tb" style="left:716px;top:638px;line-height:16px;height:16px;letter-spacing:-0.410px;">Plot RMS</span>
<div class="bbtn" style="left:689px;top:663px;width:80px;height:23px;"></div>
<svg style="left:697px;top:666px" width="18" height="16" viewBox="0 0 18 16"><rect x="1" y="2.5" width="13" height="8.5" fill="#e6e6e0" stroke="#a8aeb4" stroke-width="1"/><path d="M1 2.5 H14" stroke="#8c98b4" stroke-width="1.6"/><circle cx="8" cy="8" r="3.3" fill="#d4e4ee" stroke="#8494a0" stroke-width="1.1"/><path d="M10.6 10.6 L14 14" stroke="#7c6840" stroke-width="2" stroke-linecap="round"/><rect x="13" y="1.2" width="2.2" height="2.2" fill="#606870"/></svg>
<span class="tb" style="left:718px;top:666px;line-height:16px;height:16px;letter-spacing:-0.504px;">Tail LOG</span>
<div class="grp" style="left:805px;top:498px;width:392px;height:193px;"></div>
<div class="g" style="left:811px;top:492px;width:96px;height:13px;"></div>
<span class="vb" style="left:814px;top:492px;line-height:15px;height:15px;letter-spacing:0.212px;">Run Summary</span>
<div class="lab" style="left:816px;top:515px;width:101px;height:13px;"></div>
<span class="tb" style="left:819px;top:515px;line-height:13px;height:13px;letter-spacing:0.277px;color:#fff;font-size:10px">Objective Function</span>
<div class="sunk w" style="left:816px;top:532px;width:101px;height:24px;"></div>
<span style="left:820px;top:533px;line-height:18px;height:18px;font:italic 15px 'Liberation Sans',sans-serif;-webkit-text-stroke:.5px #000">O<span style="position:static;font:8px 'Liberation Sans',sans-serif;vertical-align:-2px">x</span></span>
<span class="v" style="left:838px;top:537px;line-height:16px;height:16px;letter-spacing:-0.062px;">1515.097</span>
<div class="lab" style="left:816px;top:570px;width:60px;height:24px;"></div>
<span class="tb" style="left:819px;top:571px;line-height:12px;height:12px;letter-spacing:0.427px;color:#fff;font-size:10px">PAV, WCT,</span>
<span class="tb" style="left:819px;top:583px;line-height:12px;height:12px;letter-spacing:0.027px;color:#fff;font-size:10px">GOR, WGR</span>
<div class="sunk w" style="left:816px;top:599px;width:101px;height:79px;"></div>
<span style="left:821px;top:601px;line-height:18px;height:18px;font:16px 'Liberation Sans',sans-serif;-webkit-text-stroke:.45px #000">P<span style="position:static;font:9px 'Liberation Sans',sans-serif;vertical-align:-2px;margin-left:-1px">1</span></span>
<span class="vb" style="left:838px;top:604px;line-height:16px;height:16px;letter-spacing:0.091px;">3657.8</span>
<svg style="left:821px;top:619px" width="12" height="16" viewBox="0 0 12 16"><defs><radialGradient id="db8e4ff" cx="42%" cy="66%" r="46%"><stop offset="0" stop-color="#b8e4ff"/><stop offset=".55" stop-color="#2a8ae8"/><stop offset="1" stop-color="#1050b0"/></radialGradient></defs><path d="M5.6 0.3 C6.6 0.3 6.6 2 6.8 3.6 C7.2 6 10.6 7.6 10.6 11 A5 4.6 0 0 1 0.6 11 C0.6 7.6 4 6 4.4 3.6 C4.6 2 4.6 0.3 5.6 0.3 Z" fill="url(#db8e4ff)"/></svg>
<span class="vb" style="left:838px;top:621px;line-height:16px;height:16px;letter-spacing:-0.035px;">0.06</span>
<svg style="left:821px;top:636px" width="12" height="16" viewBox="0 0 12 16"><defs><radialGradient id="da8f0a0" cx="42%" cy="66%" r="46%"><stop offset="0" stop-color="#a8f0a0"/><stop offset=".55" stop-color="#18b028"/><stop offset="1" stop-color="#0a7010"/></radialGradient></defs><path d="M5.6 0.3 C6.6 0.3 6.6 2 6.8 3.6 C7.2 6 10.6 7.6 10.6 11 A5 4.6 0 0 1 0.6 11 C0.6 7.6 4 6 4.4 3.6 C4.6 2 4.6 0.3 5.6 0.3 Z" fill="url(#da8f0a0)"/></svg>
<span class="vb" style="left:838px;top:638px;line-height:16px;height:16px;letter-spacing:-0.035px;">0.78</span>
<svg style="left:821px;top:653px" width="12" height="16" viewBox="0 0 12 16"><defs><radialGradient id="dffa0a0" cx="42%" cy="66%" r="46%"><stop offset="0" stop-color="#ffa0a0"/><stop offset=".55" stop-color="#d81820"/><stop offset="1" stop-color="#900810"/></radialGradient></defs><path d="M5.6 0.3 C6.6 0.3 6.6 2 6.8 3.6 C7.2 6 10.6 7.6 10.6 11 A5 4.6 0 0 1 0.6 11 C0.6 7.6 4 6 4.4 3.6 C4.6 2 4.6 0.3 5.6 0.3 Z" fill="url(#dffa0a0)"/></svg>
<span class="vb" style="left:838px;top:655px;line-height:16px;height:16px;letter-spacing:0.041px;">0.081</span>
<div class="sunk" style="left:937px;top:531px;width:240px;height:140px;"></div>
<span class="vb" style="left:944px;top:539px;line-height:16px;height:16px;letter-spacing:-0.125px;">Run 4</span>
<div class="sunk1" style="left:1004px;top:533px;width:100px;height:24px;"></div>
<div style="left:1006px;top:535px;width:15px;height:21px;background:#08246b"></div>
<span class="vb" style="left:1121px;top:539px;line-height:16px;height:16px;letter-spacing:0.552px;color:#0000a8">16%</span>
<div style="left:248px;top:842px;width:1030px;height:2px;background:#848284"></div>
<div style="left:248px;top:842px;width:2px;height:132px;background:#848284"></div>
<div style="left:250px;top:844px;width:1028px;height:2px;background:#424142"></div>
<div style="left:250px;top:844px;width:2px;height:128px;background:#424142"></div>
<div style="left:1275px;top:844px;width:3px;height:130px;background:#fff"></div>
<div style="left:248px;top:972px;width:1030px;height:2px;background:#fff"></div>
<div class="w" style="left:252px;top:846px;width:1006px;height:108px;"></div>
<span class="m" style="left:255px;top:848px;line-height:16px;height:16px;letter-spacing:0.199px;">MESSAGE</span>
<div style="left:255px;top:862px;width:56px;height:1px;background:#000"></div>
<span class="m" style="left:312px;top:848px;line-height:16px;height:16px;">:</span>
<span class="t" style="left:321px;top:847px;line-height:16px;height:16px;letter-spacing:-0.094px;">Run WORKSHOP2_3.DATA Terminated Correctly At Monday, 22 August 2005 @ 14:19:09</span>
<span class="m" style="left:255px;top:864px;line-height:16px;height:16px;letter-spacing:0.199px;">MESSAGE</span>
<div style="left:255px;top:878px;width:56px;height:1px;background:#000"></div>
<span class="m" style="left:312px;top:864px;line-height:16px;height:16px;">:</span>
<span class="t" style="left:321px;top:863px;line-height:16px;height:16px;letter-spacing:-0.077px;">Input File Is Of Format: RSM (Standard)</span>
<span class="m" style="left:255px;top:880px;line-height:16px;height:16px;letter-spacing:0.199px;">MESSAGE</span>
<div style="left:255px;top:894px;width:56px;height:1px;background:#000"></div>
<span class="m" style="left:312px;top:880px;line-height:16px;height:16px;">:</span>
<span class="t" style="left:321px;top:879px;line-height:16px;height:16px;letter-spacing:-0.113px;">Input File Correctly Scanned. File Contains Data For 532 Properties</span>
<span class="m" style="left:255px;top:896px;line-height:16px;height:16px;letter-spacing:0.199px;">MESSAGE</span>
<div style="left:255px;top:910px;width:56px;height:1px;background:#000"></div>
<span class="m" style="left:312px;top:896px;line-height:16px;height:16px;">:</span>
<span class="t" style="left:321px;top:895px;line-height:16px;height:16px;letter-spacing:-0.166px;">Scanning Operations Took 0.55 Seconds</span>
<span class="m" style="left:255px;top:912px;line-height:16px;height:16px;letter-spacing:0.199px;">MESSAGE</span>
<div style="left:255px;top:926px;width:56px;height:1px;background:#000"></div>
<span class="m" style="left:312px;top:912px;line-height:16px;height:16px;">:</span>
<span class="t" style="left:321px;top:911px;line-height:16px;height:16px;letter-spacing:-0.032px;">Simulation Started At Monday, 22 August 2005 @ 14:19:15</span>
<div class="hatch" style="left:1258px;top:846px;width:16px;height:108px;"></div>
<div class="btn" style="left:1258px;top:846px;width:16px;height:16px;"></div>
<svg style="left:1262px;top:852px" width="7" height="4" viewBox="0 0 7 4"><polygon points="0,4 3.5,0 7,4" fill="#000"/></svg>
<div class="btn" style="left:1258px;top:930px;width:16px;height:8px;"></div>
<div class="btn" style="left:1258px;top:938px;width:16px;height:16px;"></div>
<svg style="left:1262px;top:944px" width="7" height="4" viewBox="0 0 7 4"><polygon points="0,0 7,0 3.5,4" fill="#000"/></svg>
<div class="hatch" style="left:252px;top:954px;width:1006px;height:16px;"></div>
<div class="btn" style="left:254px;top:954px;width:16px;height:16px;"></div>
<svg style="left:259px;top:958px" width="4" height="7" viewBox="0 0 4 7"><polygon points="4,0 4,7 0,3.5" fill="#848284"/></svg>
<div class="btn" style="left:1242px;top:954px;width:16px;height:16px;"></div>
<svg style="left:1249px;top:958px" width="4" height="7" viewBox="0 0 4 7"><polygon points="0,0 4,3.5 0,7" fill="#848284"/></svg>
<div class="g" style="left:1258px;top:954px;width:17px;height:16px;"></div>
<div class="sunk1" style="left:0px;top:978px;width:853px;height:18px;"></div>
<span class="t" style="left:2px;top:979px;line-height:17px;height:17px;letter-spacing:-0.262px;">User Name: GAVANA ANDREA, Computer Name: ENWS01799575, User Logon: ag12905</span>
<div class="sunk1" style="left:855px;top:978px;width:425px;height:18px;"></div>
<span class="t" style="left:858px;top:979px;line-height:17px;height:17px;letter-spacing:0.054px;white-space:pre">Monday, 22 August 2005  @  14:20:00</span>
<div style="left:0px;top:997px;width:1280px;height:1px;background:#fff"></div>
<div class="btn" style="left:2px;top:1000px;width:55px;height:22px;"></div>
<svg style="left:6px;top:1003px" width="17" height="16" viewBox="0 0 17 16"><path d="M3 2 q3 -1.5 6 0 v5 q-3 -1.5 -6 0z" fill="#e03020"/><path d="M9.5 2 q3 1.5 6 0 v5 q-3 1.5 -6 0z" fill="#30a030"/><path d="M3 8 q3 -1.5 6 0 v5 q-3 -1.5 -6 0z" fill="#2040d0"/><path d="M9.5 8 q3 1.5 6 0 v5 q-3 1.5 -6 0z" fill="#e8c820"/><path d="M3 2 q3 -1.5 6 0 q3.5 1.5 6.5 0 v11 q-3 1.5 -6.5 0 q-3 -1.5 -6 0 z M9.2 2 v11 M3 7.6 q3 -1.5 6 0 q3.5 1.5 6.5 0" stroke="#000" stroke-width="1.1" fill="none"/><path d="M0 3.5 h2 M0 6 h2 M0 8.5 h2 M0 11 h2" stroke="#000" stroke-width="1"/><path d="M0.5 4.7 h1.5 M0.5 7.2 h1.5 M0.5 9.7 h1.5" stroke="#c02010" stroke-width="1"/></svg>
<span class="tb" style="left:23px;top:1003px;line-height:16px;height:16px;letter-spacing:0.531px;font-size:12px">Start</span>
<div style="left:60px;top:1001px;width:1px;height:20px;background:#848284"></div>
<div style="left:61px;top:1001px;width:1px;height:20px;background:#fff"></div>
<div style="left:63px;top:1002px;width:3px;height:18px;border:1px solid;border-color:#fff #848284 #848284 #fff"></div>
<div class="btn" style="left:71px;top:1000px;width:54px;height:22px;"></div>
<svg style="left:75px;top:1003px" width="16" height="16" viewBox="0 0 16 16"><circle cx="8" cy="8" r="7" fill="#3048d0"/><ellipse cx="8" cy="8" rx="8" ry="3.5" fill="none" stroke="#c04080" stroke-width="1.4" transform="rotate(-30 8 8)"/><circle cx="6" cy="10" r="2.5" fill="#c02850"/><circle cx="10" cy="6" r="2" fill="#e8e8ff"/></svg>
<span class="t" style="left:92px;top:1003px;line-height:16px;height:16px;letter-spacing:-0.325px;">An...</span>
<div class="btn" style="left:128px;top:1000px;width:54px;height:22px;"></div>
<svg style="left:132px;top:1003px" width="16" height="16" viewBox="0 0 16 16"><path d="M0.5 3 H6 L7.5 4.5 H14 V13 H0.5 Z" fill="#f0d868" stroke="#806820" stroke-width="1"/><circle cx="6.5" cy="7" r="3.6" fill="#c8ecf8" stroke="#2040a0" stroke-width="1.4"/><path d="M9 10 L14 15" stroke="#2040a0" stroke-width="2.4" stroke-linecap="round"/></svg>
<span class="t" style="left:149px;top:1003px;line-height:16px;height:16px;letter-spacing:0.128px;">D:\...</span>
<div class="btn" style="left:185px;top:1000px;width:54px;height:22px;"></div>
<svg style="left:189px;top:1003px" width="16" height="16" viewBox="0 0 16 16"><path d="M5 0.5 H12 L15 3.5 V15.5 H5 Z" fill="#fff" stroke="#606060" stroke-width="1"/><circle cx="6" cy="9" r="4" fill="none" stroke="#2a6ae0" stroke-width="2.2"/><path d="M3 9.5 H10" stroke="#2a6ae0" stroke-width="1.6"/></svg>
<span class="t" style="left:206px;top:1003px;line-height:16px;height:16px;letter-spacing:-0.097px;">Wo...</span>
<div class="btn" style="left:242px;top:1000px;width:54px;height:22px;"></div>
<svg style="left:246px;top:1003px" width="16" height="16" viewBox="0 0 16 16"><rect x="0" y="6" width="16" height="9" fill="#18988c"/><rect x="0" y="6" width="16" height="3" fill="#fff"/><rect x="0" y="6" width="16" height="9" fill="none" stroke="#208878" stroke-width=".6"/></svg>
<span class="t" style="left:263px;top:1003px;line-height:16px;height:16px;letter-spacing:-0.430px;">ECL...</span>
<div class="btn" style="left:299px;top:1000px;width:54px;height:22px;"></div>
<svg style="left:303px;top:1003px" width="16" height="16" viewBox="0 0 16 16"><path d="M5 0.5 H12 L15 3.5 V15.5 H5 Z" fill="#fff" stroke="#606060" stroke-width="1"/><circle cx="6" cy="9" r="4" fill="none" stroke="#2a6ae0" stroke-width="2.2"/><path d="M3 9.5 H10" stroke="#2a6ae0" stroke-width="1.6"/></svg>
<span class="t" style="left:320px;top:1003px;line-height:16px;height:16px;letter-spacing:-0.477px;">uni...</span>
<div class="btn" style="left:356px;top:1000px;width:54px;height:22px;"></div>
<svg style="left:360px;top:1003px" width="16" height="16" viewBox="0 0 16 16"><path d="M5 0.5 H12 L15 3.5 V15.5 H5 Z" fill="#fff" stroke="#606060" stroke-width="1"/><circle cx="6" cy="9" r="4" fill="none" stroke="#2a6ae0" stroke-width="2.2"/><path d="M3 9.5 H10" stroke="#2a6ae0" stroke-width="1.6"/></svg>
<span class="t" style="left:377px;top:1003px;line-height:16px;height:16px;letter-spacing:-0.042px;">liga...</span>
<div class="btn" style="left:413px;top:1000px;width:54px;height:22px;"></div>
<svg style="left:417px;top:1003px" width="16" height="16" viewBox="0 0 16 16"><rect x="0" y="2" width="16" height="12" fill="#000"/><rect x="0" y="2" width="16" height="2.5" fill="#848284"/><text x="1" y="11" font-family="Liberation Mono,monospace" font-size="6" fill="#fff" font-weight="bold">C:\</text></svg>
<span class="t" style="left:434px;top:1003px;line-height:16px;height:16px;letter-spacing:0.128px;">C:\...</span>
<div class="btn" style="left:470px;top:1000px;width:54px;height:22px;"></div>
<svg style="left:474px;top:1003px" width="16" height="16" viewBox="0 0 16 16"><path d="M5 0.5 H12 L15.5 4 V15.5 H5 Z" fill="#fff" stroke="#606060" stroke-width="1"/><rect x="0.5" y="3" width="10" height="10" fill="#203090"/><text x="5.5" y="11.5" text-anchor="middle" font-family="Liberation Sans,sans-serif" font-size="9" font-weight="bold" fill="#fff">W</text></svg>
<span class="t" style="left:491px;top:1003px;line-height:16px;height:16px;letter-spacing:-0.003px;">fre...</span>
<div class="btn" style="left:527px;top:1000px;width:54px;height:22px;"></div>
<svg style="left:531px;top:1003px" width="16" height="16" viewBox="0 0 16 16"><path d="M5 0.5 H12 L15.5 4 V15.5 H5 Z" fill="#fff" stroke="#606060" stroke-width="1"/><rect x="0.5" y="3" width="10" height="10" fill="#203090"/><text x="5.5" y="11.5" text-anchor="middle" font-family="Liberation Sans,sans-serif" font-size="9" font-weight="bold" fill="#fff">W</text></svg>
<span class="t" style="left:548px;top:1003px;line-height:16px;height:16px;letter-spacing:-0.247px;">Co...</span>
<div class="hatch" style="left:584px;top:1000px;width:54px;height:22px;border:1px solid;border-color:#424142 #fff #fff #424142;box-shadow:inset 1px 1px 0 #848284"></div>
<svg style="left:589px;top:1004px" width="16" height="16" viewBox="0 0 16 16"><rect width="16" height="16" fill="#08085c"/><ellipse cx="7.8" cy="7.6" rx="6.8" ry="2.1" fill="#7a78d0" transform="rotate(-42 7.8 7.6)"/><ellipse cx="7.8" cy="7.6" rx="4.6" ry="1.3" fill="#fff" transform="rotate(-42 7.8 7.6)"/><rect x="1" y="2.6" width="1.2" height="1.2" fill="#dcd8ff"/><rect x="4" y="3" width="1" height="1" fill="#b8b0f0"/><rect x="13.8" y="5" width="1.3" height="1.3" fill="#fff"/><rect x="3.2" y="7" width="1" height="1" fill="#c8c0ff"/><rect x="5" y="12" width="1.2" height="1.2" fill="#fff"/><rect x="13" y="11.6" width="1.2" height="1.2" fill="#e0dcff"/><rect x="10" y="13.5" width="1" height="1" fill="#8078c8"/></svg>
<span class="tb" style="left:608px;top:1004px;line-height:16px;height:16px;letter-spacing:0.083px;">Glo...</span>
<div class="btn" style="left:641px;top:1000px;width:54px;height:22px;"></div>
<svg style="left:645px;top:1003px" width="16" height="16" viewBox="0 0 16 16"><path d="M3 5 H13 L12 15.5 H4 Z" fill="#f4f4f0" stroke="#424142" stroke-width="1"/><path d="M5 6 L3 0.5 M8 6 L8 0 M11 6 L13 0.5" stroke="#a04020" stroke-width="1.6"/><path d="M6 6 L7 1" stroke="#2060c0" stroke-width="1.4"/></svg>
<span class="t" style="left:662px;top:1003px;line-height:16px;height:16px;letter-spacing:-0.143px;">glo...</span>
<div style="left:771px;top:1001px;width:1px;height:20px;background:#848284"></div>
<div style="left:772px;top:1001px;width:1px;height:20px;background:#fff"></div>
<div style="left:774px;top:1002px;width:3px;height:18px;border:1px solid;border-color:#fff #848284 #848284 #fff"></div>
<svg style="left:784px;top:1003px" width="16" height="16" viewBox="0 0 16 16"><circle cx="8" cy="8.5" r="5.5" fill="none" stroke="#2a7ae0" stroke-width="2.6"/><path d="M4 9 H13" stroke="#2a7ae0" stroke-width="2"/><ellipse cx="8" cy="8" rx="8" ry="3" fill="none" stroke="#e8b020" stroke-width="1" transform="rotate(-25 8 8)"/><rect x="9" y="9.5" width="5" height="2.6" fill="#d6d3ce"/></svg>
<svg style="left:807px;top:1003px" width="16" height="16" viewBox="0 0 16 16"><circle cx="8" cy="8" r="7" fill="#3048d0"/><ellipse cx="8" cy="8" rx="8" ry="3.5" fill="none" stroke="#c04080" stroke-width="1.4" transform="rotate(-30 8 8)"/><circle cx="6" cy="10" r="2.5" fill="#c02850"/><circle cx="10" cy="6" r="2" fill="#e8e8ff"/></svg>
<svg style="left:830px;top:1003px" width="16" height="16" viewBox="0 0 16 16"><rect x="1" y="1" width="14" height="14" fill="#fff" stroke="#801838" stroke-width="2"/><text x="8" y="12" text-anchor="middle" font-family="Liberation Sans,sans-serif" font-size="10" font-weight="bold" fill="#801838">P</text></svg>
<svg style="left:853px;top:1003px" width="16" height="16" viewBox="0 0 16 16"><rect x="1" y="1" width="14" height="14" fill="#fff" stroke="#207838" stroke-width="2"/><text x="8" y="12" text-anchor="middle" font-family="Liberation Sans,sans-serif" font-size="10" font-weight="bold" fill="#207838">X</text></svg>
<svg style="left:876px;top:1003px" width="16" height="16" viewBox="0 0 16 16"><rect x="1" y="1" width="14" height="14" fill="#fff" stroke="#d05810" stroke-width="2"/><text x="8" y="12" text-anchor="middle" font-family="Liberation Sans,sans-serif" font-size="10" font-weight="bold" fill="#d05810">C</text></svg>
<svg style="left:899px;top:1003px" width="16" height="16" viewBox="0 0 16 16"><rect x="0.5" y="0.5" width="15" height="15" fill="#182888"/><text x="8" y="12.5" text-anchor="middle" font-family="Liberation Sans,sans-serif" font-size="11" font-weight="bold" fill="#fff">W</text></svg>
<svg style="left:922px;top:1003px" width="16" height="16" viewBox="0 0 16 16"><rect x="0.5" y="2.5" width="15" height="11" fill="#fff" stroke="#424142"/><rect x="1" y="3" width="14" height="3" fill="#08246b"/></svg>
<svg style="left:945px;top:1003px" width="16" height="16" viewBox="0 0 16 16"><rect x="3" y="1" width="11" height="9" fill="#d0d0d0" stroke="#424142"/><rect x="5" y="3" width="7" height="5" fill="#1040c0"/><rect x="1" y="11" width="14" height="3" fill="#c0c0c0" stroke="#424142"/></svg>
<svg style="left:968px;top:1003px" width="16" height="16" viewBox="0 0 16 16"><rect x="1" y="3" width="12" height="12" fill="#fff" stroke="#2060a0" stroke-width="1.4"/><path d="M6 11 L14 1" stroke="#e0a020" stroke-width="2.4"/><rect x="4" y="7" width="5" height="5" fill="#d0e8f8" stroke="#406080" stroke-width=".6"/></svg>
<svg style="left:991px;top:1003px" width="16" height="16" viewBox="0 0 16 16"><circle cx="8" cy="8" r="7" fill="#fff" stroke="#2060d0" stroke-width="2"/><path d="M1.5 8 A6.5 6.5 0 0 1 8 1.5" stroke="#e08020" stroke-width="2" fill="none"/><path d="M8 14.5 A6.5 6.5 0 0 0 14.5 8" stroke="#30a030" stroke-width="2" fill="none"/><polygon points="6,5 11,8 6,11" fill="#203080"/></svg>
<svg style="left:1014px;top:1003px" width="16" height="16" viewBox="0 0 16 16"><circle cx="8" cy="8" r="7" fill="#30a040"/><path d="M2 6 q4 3 7 0 t5 2" stroke="#2050d0" stroke-width="3" fill="none"/><path d="M1 13 L15 3" stroke="#e0c020" stroke-width="2"/></svg>
<svg style="left:1037px;top:1003px" width="16" height="16" viewBox="0 0 16 16"><rect x="1" y="5" width="12" height="9" fill="#c8dcf8" stroke="#3060c0"/><path d="M1 5 L7 10 L13 5" stroke="#3060c0" fill="none"/><circle cx="11" cy="5" r="3.5" fill="#e8f0ff" stroke="#3060c0"/></svg>
<div class="sunk1" style="left:1094px;top:1000px;width:184px;height:22px;"></div>
<svg style="left:1098px;top:1003px" width="16" height="16" viewBox="0 0 16 16"><rect x=".5" y=".5" width="15" height="15" fill="#1020d0" stroke="#000080"/><polygon points="4,3 13,8 4,13" fill="#fff"/></svg>
<svg style="left:1116px;top:1003px" width="16" height="16" viewBox="0 0 16 16"><polygon points="1,6 4,6 9,1.5 9,14.5 4,10 1,10" fill="#d8d040" stroke="#404000" stroke-width=".8"/><path d="M11.5 4.5 q2.5 3.5 0 7" stroke="#848284" fill="none"/></svg>
<svg style="left:1134px;top:1003px" width="16" height="16" viewBox="0 0 16 16"><path d="M2 1 H14 V8 Q14 13 8 15.5 Q2 13 2 8 Z" fill="#fff" stroke="#1030a0" stroke-width="1.8"/><text x="8" y="11" text-anchor="middle" font-family="Liberation Sans,sans-serif" font-size="9" font-weight="bold" fill="#d01818">V</text></svg>
<svg style="left:1152px;top:1003px" width="16" height="16" viewBox="0 0 16 16"><circle cx="8" cy="8" r="7" fill="#e02818"/><circle cx="8" cy="8" r="3.4" fill="#f0d020"/><circle cx="8" cy="8" r="1.5" fill="#806010"/></svg>
<svg style="left:1170px;top:1003px" width="16" height="16" viewBox="0 0 16 16"><rect x="0" y="0" width="16" height="16" fill="#e8f0f0"/><path d="M2 15 L9 5 M9 5 L15 2 M9 5 L14 8 M9 5 L8 0 M9 5 L4 3" stroke="#18908c" stroke-width="2" fill="none"/></svg>
<svg style="left:1188px;top:1003px" width="16" height="16" viewBox="0 0 16 16"><rect width="16" height="16" fill="#08085c"/><ellipse cx="7.8" cy="7.6" rx="6.8" ry="2.1" fill="#7a78d0" transform="rotate(-42 7.8 7.6)"/><ellipse cx="7.8" cy="7.6" rx="4.6" ry="1.3" fill="#fff" transform="rotate(-42 7.8 7.6)"/><rect x="1" y="2.6" width="1.2" height="1.2" fill="#dcd8ff"/><rect x="4" y="3" width="1" height="1" fill="#b8b0f0"/><rect x="13.8" y="5" width="1.3" height="1.3" fill="#fff"/><rect x="3.2" y="7" width="1" height="1" fill="#c8c0ff"/><rect x="5" y="12" width="1.2" height="1.2" fill="#fff"/><rect x="13" y="11.6" width="1.2" height="1.2" fill="#e0dcff"/><rect x="10" y="13.5" width="1" height="1" fill="#8078c8"/></svg>
<span class="t" style="left:1223px;top:1004px;line-height:16px;height:16px;letter-spacing:-0.424px;">2:20 PM</span>
</div></body></html>
